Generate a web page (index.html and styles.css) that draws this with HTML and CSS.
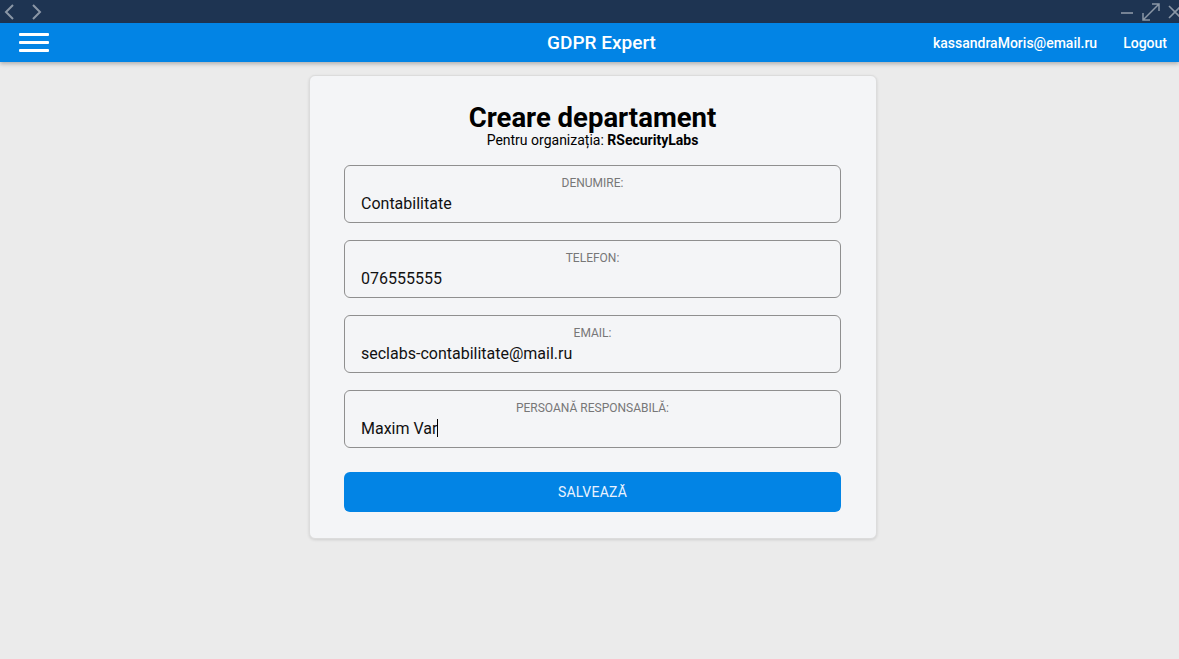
FILE: index.html
```html
<!DOCTYPE html>
<html lang="ro">
<head>
<meta charset="utf-8">
<title>GDPR Expert</title>
<link rel="stylesheet" href="styles.css">
</head>
<body>
<div class="titlebar">
  <div class="nav-arrows">
    <svg width="14" height="18" viewBox="0 0 14 18"><path d="M10 2 L3 9 L10 16" fill="none" stroke="#8b97a6" stroke-width="2"/></svg>
    <svg width="14" height="18" viewBox="0 0 14 18"><path d="M4 2 L11 9 L4 16" fill="none" stroke="#8b97a6" stroke-width="2"/></svg>
  </div>
  <div class="win-controls">
    <svg width="14" height="14" viewBox="0 0 14 14"><path d="M1 8 H13" stroke="#8b97a6" stroke-width="1.6"/></svg>
    <svg width="20" height="20" viewBox="0 0 20 20"><path d="M2 18 L18 2 M11 2 H18 V9 M2 11 V18 H9" fill="none" stroke="#8b97a6" stroke-width="1.5"/></svg>
    <svg width="14" height="14" viewBox="0 0 14 14"><path d="M1 1 L13 13 M13 1 L1 13" stroke="#8b97a6" stroke-width="1.6"/></svg>
  </div>
</div>
<header class="appbar">
  <div class="menu-btn">
    <span></span><span></span><span></span>
  </div>
  <div class="app-title">GDPR Expert</div>
  <div class="user-area">
    <span class="user-email">kassandraMoris@email.ru</span>
    <span class="logout">Logout</span>
  </div>
</header>
<main class="content">
  <section class="card">
    <h1 class="card-title">Creare departament</h1>
    <p class="card-sub">Pentru organizația: <b>RSecurityLabs</b></p>
    <div class="field">
      <div class="field-label">DENUMIRE:</div>
      <div class="field-value">Contabilitate</div>
    </div>
    <div class="field">
      <div class="field-label">TELEFON:</div>
      <div class="field-value">076555555</div>
    </div>
    <div class="field">
      <div class="field-label">EMAIL:</div>
      <div class="field-value">seclabs-contabilitate@mail.ru</div>
    </div>
    <div class="field">
      <div class="field-label">PERSOANĂ RESPONSABILĂ:</div>
      <div class="field-value">Maxim Var<span class="caret"></span></div>
    </div>
    <button class="save-btn">SALVEAZĂ</button>
  </section>
</main>
</body>
</html>
```
FILE: styles.css
```css
html, body {
  margin: 0;
  padding: 0;
}
body {
  width: 1179px;
  height: 659px;
  overflow: hidden;
  background: #ebebeb;
  font-family: Roboto, "Liberation Sans", Arial, sans-serif;
  color: #000;
}
.titlebar {
  height: 23px;
  background: #1e3452;
  display: flex;
  justify-content: space-between;
  align-items: center;
}
.nav-arrows {
  display: flex;
  gap: 12px;
  padding-left: 3px;
}
.win-controls {
  display: flex;
  align-items: center;
  gap: 7px;
  margin-right: -3px;
}
.appbar {
  height: 39px;
  background: #0284e5;
  display: flex;
  align-items: center;
  position: relative;
  box-shadow: 0 2px 4px rgba(0,0,0,0.25);
}
.menu-btn {
  width: 30px;
  margin-left: 19px;
  display: flex;
  flex-direction: column;
  gap: 5px;
}
.menu-btn span {
  display: block;
  height: 3px;
  background: #fff;
  border-radius: 1px;
}
.app-title {
  position: absolute;
  left: 0;
  right: 0;
  text-align: center;
  color: #fff;
  font-size: 19px;
  font-weight: 500;
  pointer-events: none;
  padding-left: 24px;
}
.user-area {
  margin-left: auto;
  display: flex;
  align-items: center;
  gap: 26px;
  margin-right: 12px;
  color: #fff;
  font-size: 14px;
  font-weight: 500;
}
.content {
  display: flex;
  justify-content: center;
  padding-top: 13px;
}
.card {
  box-sizing: border-box;
  width: 568px;
  margin-left: 7px;
  background: #f4f5f7;
  border: 1px solid #dcdcdc;
  border-radius: 6px;
  box-shadow: 0 1px 3px rgba(0,0,0,0.12);
  padding: 26px 35px 26px 34px;
  display: flex;
  flex-direction: column;
}
.card-title {
  margin: 0;
  text-align: center;
  font-size: 27.5px;
  font-weight: 700;
  line-height: 32px;
}
.card-sub {
  margin: -1px 0 17px;
  text-align: center;
  font-size: 14px;
  line-height: 15px;
}
.card-sub b {
  font-weight: 700;
}
.field {
  height: 58px;
  border: 1px solid #8f8f8f;
  border-radius: 6px;
  margin-bottom: 17px;
  padding: 0 16px;
  box-sizing: border-box;
}
.field-label {
  text-align: center;
  font-size: 12px;
  color: #777;
  padding-top: 9px;
  line-height: 16px;
}
.field-value {
  font-size: 16px;
  line-height: 20px;
  margin-top: 3px;
  color: #111;
}
.caret {
  display: inline-block;
  width: 1px;
  height: 18px;
  background: #000;
  vertical-align: -3px;
}
.save-btn {
  margin-top: 7px;
  height: 40px;
  border: none;
  border-radius: 6px;
  background: #0284e5;
  color: #e8f2ff;
  font-family: Roboto, "Liberation Sans", Arial, sans-serif;
  font-size: 14px;
  letter-spacing: 0.2px;
}
```
